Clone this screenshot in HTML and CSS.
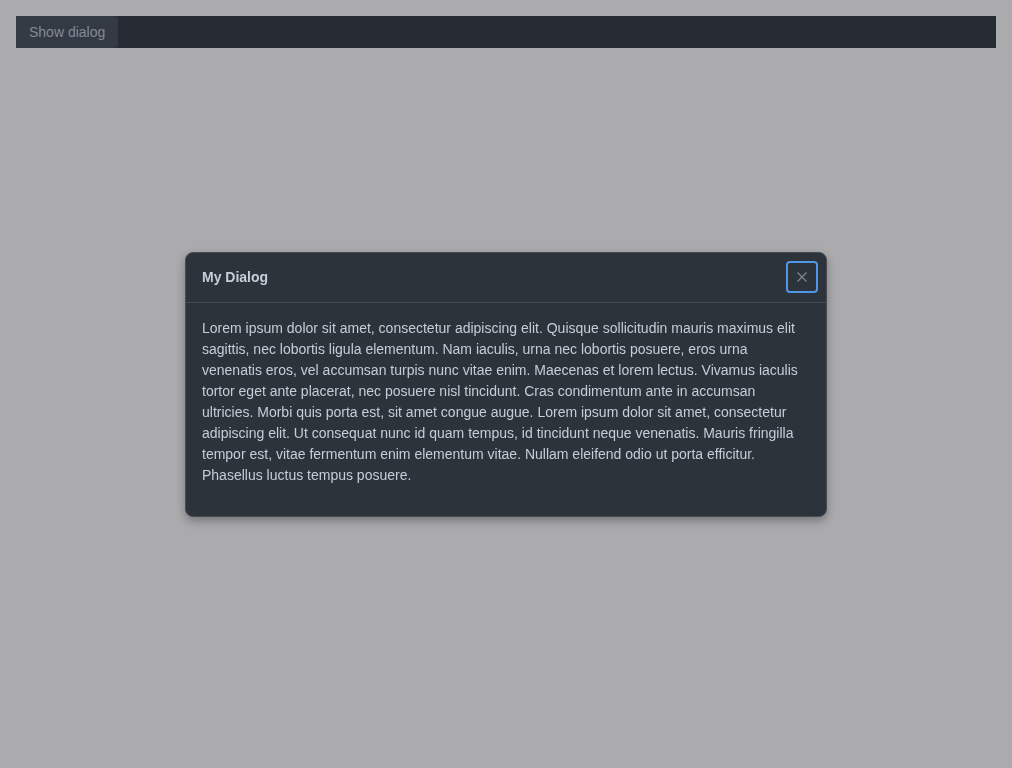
FILE: index.html
```html
<!DOCTYPE html>
<html>
<head>
<meta charset="utf-8">
<link rel="stylesheet" href="styles.css">
</head>
<body>
<div class="bar">
  <button class="show-btn">Show dialog</button>
</div>
<div class="overlay">
  <div class="dialog">
    <div class="dialog-header">
      <h2 class="dialog-title">My Dialog</h2>
      <button class="close-btn" aria-label="Close">
        <svg width="10" height="10" viewBox="0 0 10 10"><path d="M0.5 0.5L9.5 9.5M9.5 0.5L0.5 9.5" stroke="#7d858f" stroke-width="1.3" fill="none"/></svg>
      </button>
    </div>
    <div class="dialog-body">
      <p>Lorem ipsum dolor sit amet, consectetur adipiscing elit. Quisque sollicitudin mauris maximus elit sagittis, nec lobortis ligula elementum. Nam iaculis, urna nec lobortis posuere, eros urna venenatis eros, vel accumsan turpis nunc vitae enim. Maecenas et lorem lectus. Vivamus iaculis tortor eget ante placerat, nec posuere nisl tincidunt. Cras condimentum ante in accumsan ultricies. Morbi quis porta est, sit amet congue augue. Lorem ipsum dolor sit amet, consectetur adipiscing elit. Ut consequat nunc id quam tempus, id tincidunt neque venenatis. Mauris fringilla tempor est, vitae fermentum enim elementum vitae. Nullam eleifend odio ut porta efficitur. Phasellus luctus tempus posuere.</p>
    </div>
  </div>
</div>
</body>
</html>
```

FILE: styles.css
```css
html, body {
  margin: 0;
  padding: 0;
}
body {
  background: #ababae;
  padding: 16px;
  font-family: "Liberation Sans", Arial, sans-serif;
  height: 768px;
  box-sizing: border-box;
}
.bar {
  background: #262a33;
  height: 32px;
  display: flex;
  align-items: stretch;
}
.show-btn {
  background: #333a44;
  color: #858b94;
  border: none;
  border-radius: 0 4px 4px 0;
  font-family: inherit;
  font-size: 14px;
  line-height: 16px;
  padding: 0 13px;
  white-space: nowrap;
}
.overlay {
  position: fixed;
  inset: 0;
  display: flex;
  justify-content: center;
  align-items: flex-start;
  padding-top: 252px;
}
.dialog {
  width: 642px;
  box-sizing: border-box;
  background: #2d333b;
  border: 1px solid #454c55;
  border-radius: 8px;
  box-shadow: 0 4px 10px rgba(0,0,0,0.3);
}
.dialog-header {
  height: 50px;
  box-sizing: border-box;
  border-bottom: 1px solid #454c55;
  display: flex;
  align-items: flex-start;
  justify-content: space-between;
  padding: 8px 8px 0 16px;
}
.dialog-title {
  margin: 0;
  font-size: 14px;
  line-height: 32px;
  font-weight: bold;
  color: #c5cdd7;
}
.close-btn {
  width: 32px;
  height: 32px;
  box-sizing: border-box;
  background: transparent;
  border: 2px solid #4f95e8;
  border-radius: 4px;
  display: flex;
  align-items: center;
  justify-content: center;
  padding: 0;
}
.dialog-body {
  padding: 15px 16px 30px;
}
.dialog-body p {
  margin: 0;
  font-size: 14px;
  line-height: 21px;
  color: #c5cdd7;
}
```
